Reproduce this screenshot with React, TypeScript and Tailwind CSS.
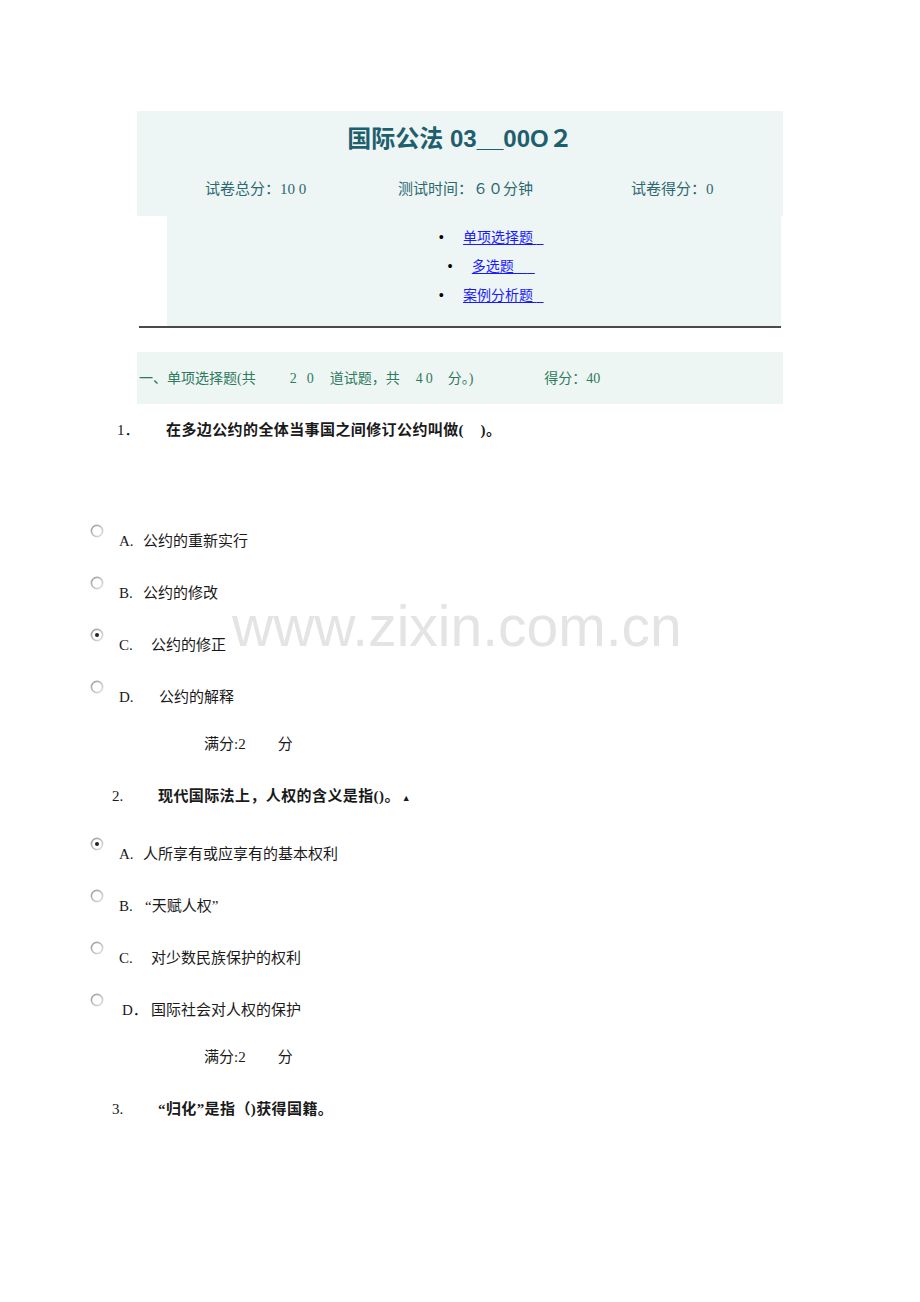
import React from 'react'

const serif = '"Liberation Serif", "Noto Sans CJK SC", serif'
const sans = '"Liberation Sans", "Noto Sans CJK SC", sans-serif'

type Option = { letter: string; text: string; letterLeft: number; textLeft: number; checked?: boolean }

const q1: Option[] = [
  { letter: 'A.', text: '公约的重新实行', letterLeft: 119, textLeft: 143 },
  { letter: 'B.', text: '公约的修改', letterLeft: 119, textLeft: 143 },
  { letter: 'C.', text: '公约的修正', letterLeft: 119, textLeft: 151, checked: true },
  { letter: 'D.', text: '公约的解释', letterLeft: 119, textLeft: 159 },
]

const q2: Option[] = [
  { letter: 'A.', text: '人所享有或应享有的基本权利', letterLeft: 119, textLeft: 143, checked: true },
  { letter: 'B.', text: '“天赋人权”', letterLeft: 119, textLeft: 145 },
  { letter: 'C.', text: '对少数民族保护的权利', letterLeft: 119, textLeft: 151 },
  { letter: 'D．', text: '国际社会对人权的保护', letterLeft: 122, textLeft: 151 },
]

const navLinks = ['单项选择题 ', '多选题　', '案例分析题 ']

function Radio({ checked }: { checked?: boolean }) {
  return (
    <svg width="14" height="14" viewBox="0 0 14 14" className="block">
      <defs>
        <linearGradient id="rg" x1="0" y1="0" x2="1" y2="1">
          <stop offset="0" stopColor="#9a9a9a" />
          <stop offset="1" stopColor="#e2e2e2" />
        </linearGradient>
      </defs>
      <circle cx="7" cy="7" r="5.6" fill="#fff" stroke="url(#rg)" strokeWidth="1.6" />
      {checked && <circle cx="7" cy="7" r="2" fill="#222" />}
    </svg>
  )
}

function OptionRow({ o }: { o: Option }) {
  return (
    <div className="relative h-[52px]">
      <div className="absolute left-[90px] top-[9px]">
        <Radio checked={o.checked} />
      </div>
      <span className="absolute top-[16px] leading-[20px]" style={{ left: o.letterLeft }}>
        {o.letter}
      </span>
      <span className="absolute top-[16px] leading-[20px]" style={{ left: o.textLeft }}>
        {o.text}
      </span>
    </div>
  )
}

function FullScore() {
  return (
    <div className="mt-[11px] flex h-[20px] items-center leading-[20px]">
      <span className="ml-[204px]">满分:2</span>
      <span className="ml-[32px]">分</span>
    </div>
  )
}

export default function App() {
  return (
    <div className="relative min-h-[1302px] w-[920px] bg-white text-[15px] text-[#1a1a1a]" style={{ fontFamily: serif }}>
      {/* Header */}
      <div className="h-[111px]" />
      <div className="ml-[137px] w-[646px] bg-[#eef5f5]">
        <div className="flex h-[54px] items-center justify-center pt-[1px]">
          <h1 className="text-[24px] font-bold text-[#1e5f6e]" style={{ fontFamily: sans }}>
            国际公法 03__00O２
          </h1>
        </div>
        <div className="flex h-[51px] items-start pt-[14px] text-[15px] leading-[20px] text-[#2d6870]">
          <span className="ml-[68px] w-[193px]">试卷总分：10 0</span>
          <span className="w-[233px]">测试时间：６０分钟</span>
          <span>试卷得分：0</span>
        </div>
      </div>
      <div className="ml-[167px] flex h-[110px] w-[614px] flex-col items-center bg-[#eef5f5] pl-[34px] pt-[7px] text-[14px]">
        {navLinks.map((t, i) => (
          <div key={i} className="flex h-[29px] items-center">
            <span className="mr-[19px] text-[16px] text-black">•</span>
            <a href="#" className="whitespace-pre text-[#1a1aff] underline underline-offset-2">
              {t}
              {'  '}
            </a>
          </div>
        ))}
      </div>
      <div className="ml-[139px] h-[2px] w-[642px] bg-[#4a4a4a]" />

      {/* Section bar */}
      <div className="ml-[137px] mt-[24px] flex h-[52px] w-[646px] items-center bg-[#eef6f4] pl-[2px] text-[14px] text-[#2f7a5e]">
        <span>一、单项选择题(共</span>
        <span className="ml-[34px] tracking-[10px]">20</span>
        <span className="ml-[6px]">道试题，共</span>
        <span className="ml-[16px] tracking-[3px]">40</span>
        <span className="ml-[12px]">分。)</span>
        <span className="ml-[71px]">得分：40</span>
      </div>

      {/* Question 1 */}
      <div className="relative mt-[16px] h-[20px] font-bold leading-[20px]">
        <span className="absolute left-[117px] font-normal">1．</span>
        <span className="absolute left-[166px] tracking-[0.4px]">
          在多边公约的全体当事国之间修订公约叫做(&nbsp;&nbsp;&nbsp;&nbsp;)。
        </span>
      </div>
      <div className="mt-[75px]">
        {q1.map((o, i) => (
          <OptionRow key={i} o={o} />
        ))}
      </div>
      <FullScore />

      {/* Question 2 */}
      <div className="relative mt-[32px] h-[20px] font-bold leading-[20px]">
        <span className="absolute left-[112px] font-normal">2.</span>
        <span className="absolute left-[158px] tracking-[0.4px]">
          现代国际法上，人权的含义是指()。<span className="ml-[2px] text-[9px]">▲</span>
        </span>
      </div>
      <div className="mt-[22px]">
        {q2.map((o, i) => (
          <OptionRow key={i} o={o} />
        ))}
      </div>
      <FullScore />

      {/* Question 3 */}
      <div className="relative mt-[32px] h-[20px] font-bold leading-[20px]">
        <span className="absolute left-[112px] font-normal">3.</span>
        <span className="absolute left-[158px] tracking-[0.4px]">“归化”是指（)获得国籍。</span>
      </div>

      {/* Watermark */}
      <div
        className="pointer-events-none absolute left-[232px] top-[598px] text-[57px] leading-none text-[#e4e4e4]"
        style={{ fontFamily: sans }}
      >
        www.zixin.com.cn
      </div>
    </div>
  )
}
